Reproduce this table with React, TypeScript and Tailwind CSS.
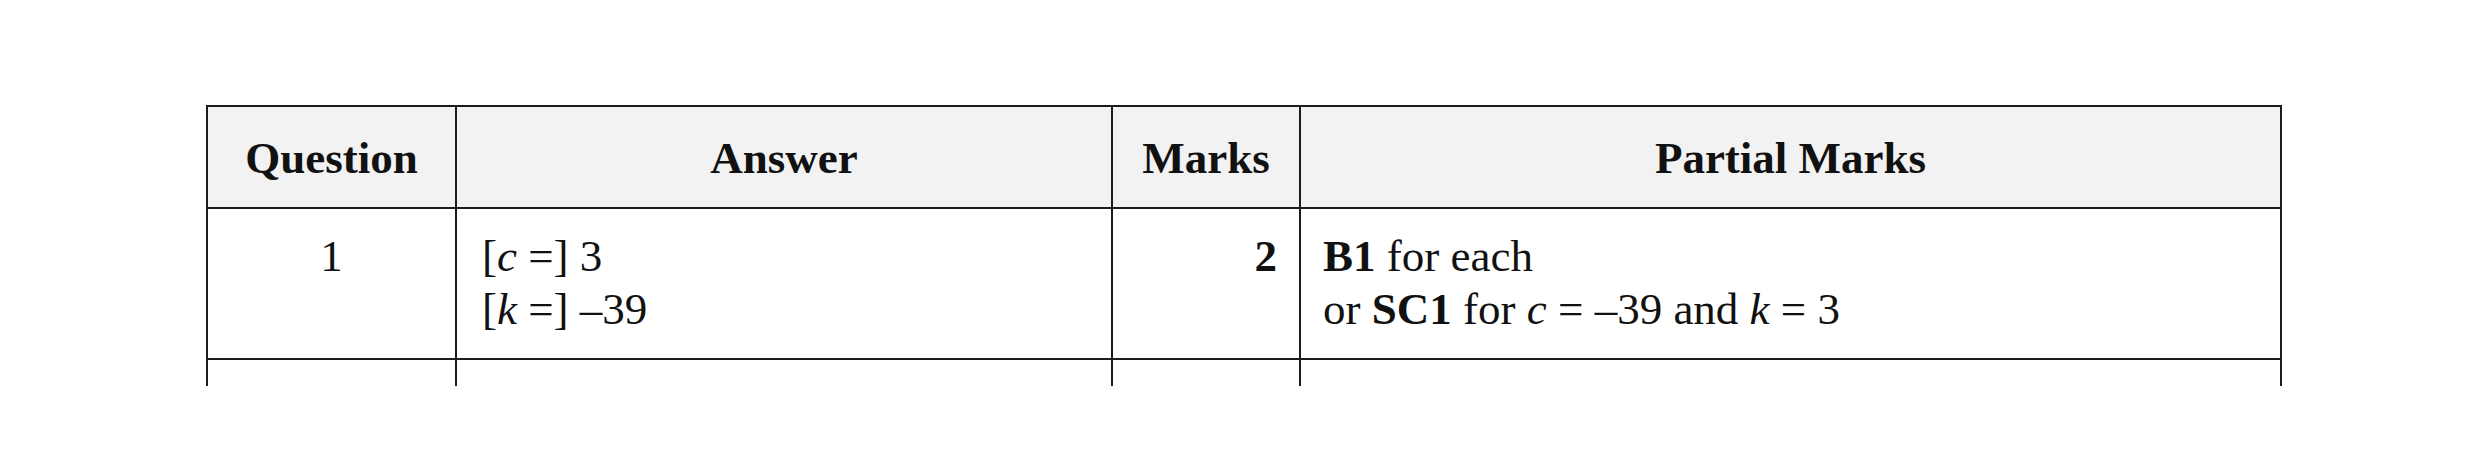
const serif = "font-['Liberation_Serif','Times_New_Roman',serif]";

const cols = "grid grid-cols-[249px_656px_188px_981px]";

export default function App() {
  return (
    <div className={`h-[461px] w-[2481px] overflow-hidden bg-white pl-[206px] pt-[105px] text-[#111] ${serif}`}>
      <div className="w-[2076px] border-l-2 border-t-2 border-[#1c1c1c]">
        {/* header */}
        <div className={`${cols} h-[102px] bg-[#f2f2f2] text-[45px] font-bold`}>
          <div className="flex items-center justify-center border-r-2 border-b-2 border-[#1c1c1c] pt-1">
            Question
          </div>
          <div className="flex items-center justify-center border-r-2 border-b-2 border-[#1c1c1c] pt-1">
            Answer
          </div>
          <div className="flex items-center justify-center border-r-2 border-b-2 border-[#1c1c1c] pt-1">
            Marks
          </div>
          <div className="flex items-center justify-center border-r-2 border-b-2 border-[#1c1c1c] pt-1">
            Partial Marks
          </div>
        </div>

        {/* row 1 */}
        <div className={`${cols} h-[151px] text-[45px] leading-[53px]`}>
          <div className="border-r-2 border-b-2 border-[#1c1c1c] pt-[21px] text-center">1</div>
          <div className="border-r-2 border-b-2 border-[#1c1c1c] pt-[21px] pl-[25px]">
            <div>
              [<i>c</i> =] 3
            </div>
            <div>
              [<i>k</i> =] –39
            </div>
          </div>
          <div className="border-r-2 border-b-2 border-[#1c1c1c] pt-[21px] pr-[22px] text-right font-bold">
            2
          </div>
          <div className="border-r-2 border-b-2 border-[#1c1c1c] pt-[21px] pl-[22px]">
            <div>
              <b>B1</b> for each
            </div>
            <div>
              or <b>SC1</b> for <i>c</i> = –39 and <i>k</i> = 3
            </div>
          </div>
        </div>

        {/* next row, cut off */}
        <div className={`${cols} h-[26px]`}>
          <div className="border-r-2 border-[#1c1c1c]" />
          <div className="border-r-2 border-[#1c1c1c]" />
          <div className="border-r-2 border-[#1c1c1c]" />
          <div className="border-r-2 border-[#1c1c1c]" />
        </div>
      </div>
    </div>
  );
}
